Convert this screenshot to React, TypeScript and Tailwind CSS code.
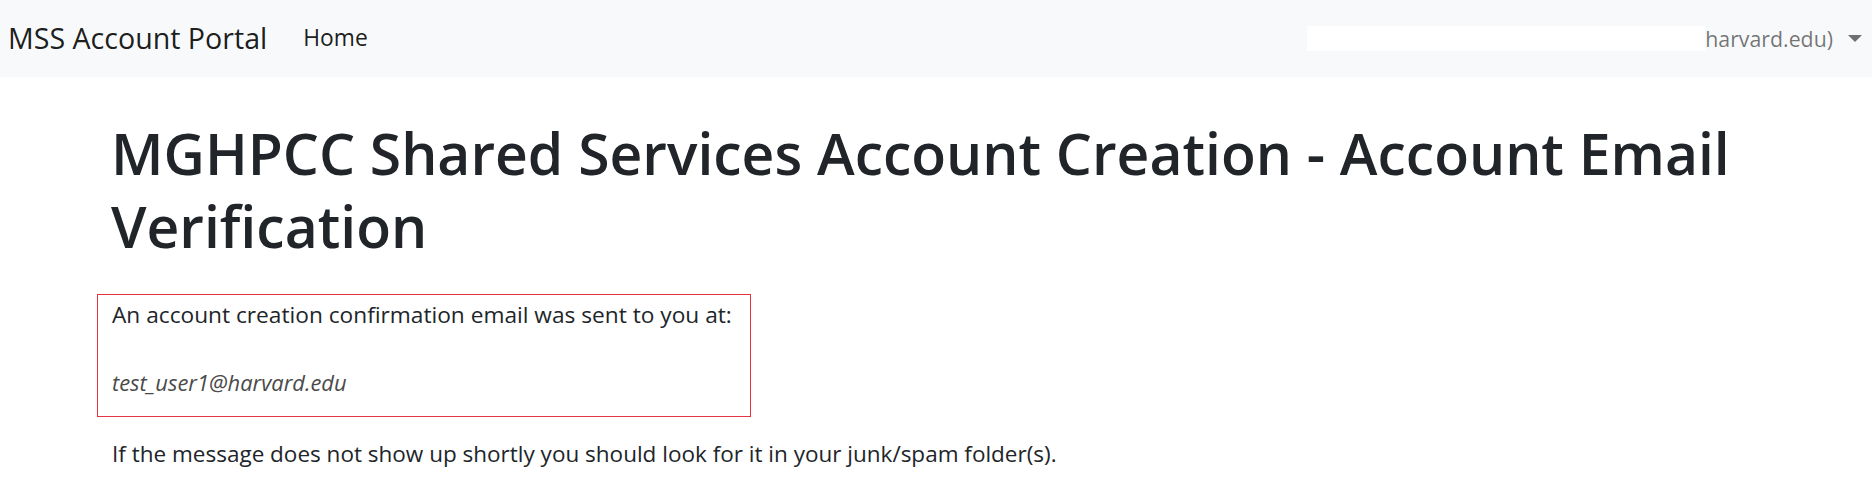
export default function App() {
    return (
        <div className="min-h-screen bg-white font-['Open_Sans',sans-serif] text-[#212529]">
            <nav className="flex h-[77px] items-center bg-[#f8f9fa] pl-[8px] pr-[10px]">
                <span className="text-[28.6px] leading-none text-black/90">MSS Account Portal</span>
                <a className="ml-[36px] text-[22.8px] leading-none text-black/90">Home</a>
                <div className="ml-auto flex items-center">
                    <span className="h-[25px] w-[398px] bg-white"></span>
                    <span className="text-[21.3px] leading-none text-black/55">harvard.edu)</span>
                    <span className="ml-[15px] h-0 w-0 border-x-[7px] border-t-[7px] border-x-transparent border-t-black/55"></span>
                </div>
            </nav>

            <main className="pl-[97px]">
                <h1 className="ml-[14px] mt-[40px] w-[1750px] text-[57px] font-semibold leading-[73px]">
                    MGHPCC Shared Services Account Creation - Account Email Verification
                </h1>

                <div className="mt-[31px] h-[123px] w-[654px] border border-[#e3343f] px-[14px] pt-[3px]">
                    <p className="text-[22.7px] leading-[33px]">An account creation confirmation email was sent to you at:</p>
                    <p className="mt-[38px] text-[21.9px] italic leading-[28px] text-[#4a4a4a]">test_user1@harvard.edu</p>
                </div>

                <p className="ml-[15px] mt-[20px] text-[22.5px] leading-[33px]">
                    If the message does not show up shortly you should look for it in your junk/spam folder(s).
                </p>
            </main>
        </div>
    );
}
